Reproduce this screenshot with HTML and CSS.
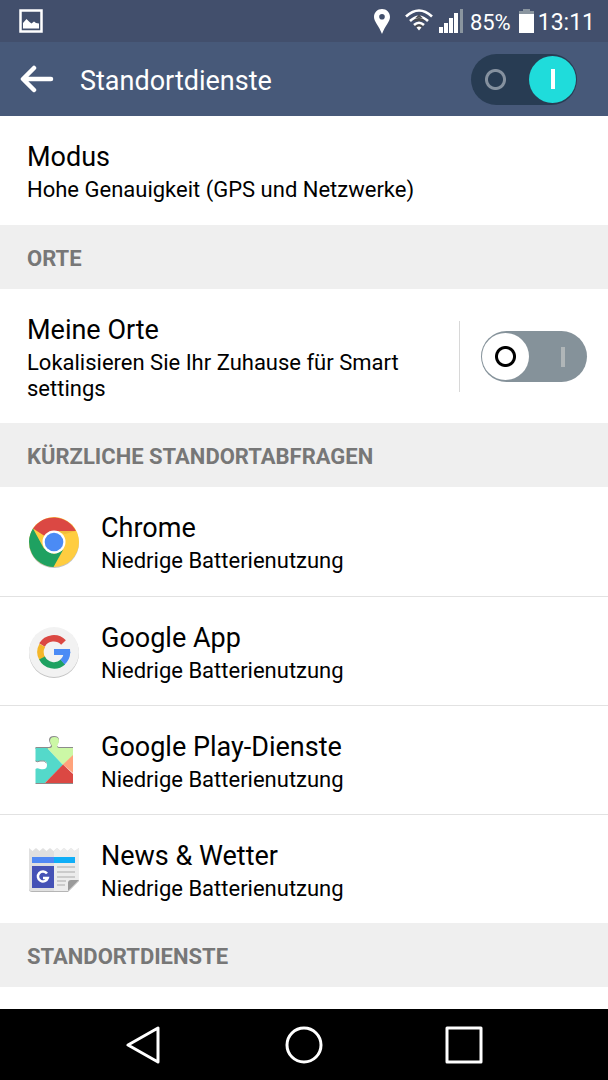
FILE: index.html
```html
<!doctype html>
<html lang="de">
<head>
	<meta charset="utf-8">
	<meta name="viewport" content="width=device-width, initial-scale=1">
	<title>Standortdienste</title>
	<link rel="stylesheet" href="styles.css">
</head>
<body>
<div class="statusbar">
	<svg class="picture" width="24" height="24" viewBox="0 0 24 24">
		<rect x="1.5" y="1.5" width="21" height="21" fill="none" stroke="#fff" stroke-width="2.5"/>
		<path d="M4 19.500v-5.500l3.500-4 3 3 2 1.500 2.500-2 2 1.500 3 .5v5z" fill="#fff"/>
	</svg>
	<div class="status">
		<svg class="pin" width="16" height="25" viewBox="0 0 16 25">
			<path fill="#fff" fill-rule="evenodd" d="M8 0C3.500 0 0 3.500 0 8c0 4.500 5 9 8 17 3-8 8-12.500 8-17 0-4.500-3.500-8-8-8zm0 5a2.800 2.800 0 1 1 0 5.600A2.800 2.800 0 0 1 8 5z"/>
		</svg>
		<svg class="wifi" width="28" height="24" viewBox="0 0 28 24">
			<path d="M8 12l6-6.500 6 6.500zM8 15l6 6 6-6z" fill="#494b50"/>
			<g fill="none" stroke="#fff" stroke-width="2.600">
				<path d="M1 7.500q13-12 26 0"/>
				<path d="M5 12q9-8.500 18 0"/>
				<path d="M9 16q5-4.500 10 0"/>
			</g>
			<path d="M10 9.500l4-4 4 4q-4-1.500-8 0z" fill="#494b50"/>
			<path d="M14 21.500l-2.500-3q2.500-2 5 0z" fill="#fff"/>
		</svg>
		<svg class="signal" width="24" height="24" viewBox="0 0 24 24">
			<path fill="#fff" d="M0 18h4v6H0zM5 14h4v10H5zM10 9h4v15h-4zM15 4h4v20h-4z"/>
			<path fill="#8a959f" d="M21 0h3v24h-3z"/>
		</svg>
		<span class="percent">85%</span>
		<svg class="battery" width="15" height="24" viewBox="0 0 15 24">
			<path fill="#8a959f" d="M4 0h7v2h4v3H0V2h4z"/>
			<path fill="#fff" d="M0 5h15v19H0z"/>
		</svg>
		<span class="clock">13:11</span>
	</div>
</div>
<header class="header">
	<button class="back" aria-label="Zurück">
		<svg width="34" height="28" viewBox="0 0 34 28" fill="none" stroke="#fff" stroke-width="4.500" stroke-linecap="round" stroke-linejoin="round">
			<path d="M14 3L3 14l11 11M4 14h27"/>
		</svg>
	</button>
	<h1>Standortdienste</h1>
	<input type="checkbox" class="switch" aria-label="Standortdienste" checked>
</header>
<main>
	<a href="#modus" class="row">
		<span class="text">
			<span class="title">Modus</span>
			<span class="summary">Hohe Genauigkeit (GPS und Netzwerke)</span>
		</span>
	</a>
	<h2>ORTE</h2>
	<div class="row places">
		<label class="text" for="places">
			<span class="title">Meine Orte</span>
			<span class="summary">Lokalisieren Sie Ihr Zuhause für Smart settings</span>
		</label>
		<div class="side">
			<input type="checkbox" class="switch" id="places">
		</div>
	</div>
	<h2>KÜRZLICHE STANDORTABFRAGEN</h2>
	<a href="#chrome" class="row app">
		<svg class="icon" viewBox="0 0 54 54">
			<circle cx="27" cy="28" r="25" fill="#c4c4c4"/>
			<circle cx="27" cy="27" r="25" fill="#ffcd40"/>
			<path d="M27 27L6 13.500A25 25 0 0 1 49 16H27z" fill="#db4843"/>
			<path d="M29 16h20l-11 3z" fill="#f0bd3c"/>
			<path d="M6 13.500L16.600 33 27 39l9-4-9.500 17A25 25 0 0 1 6 13.500z" fill="#1fa161"/>
			<circle cx="27" cy="27" r="11.500" fill="#fff"/>
			<circle cx="27" cy="27" r="9.300" fill="#4b8bf5"/>
		</svg>
		<span class="text">
			<span class="title">Chrome</span>
			<span class="summary">Niedrige Batterienutzung</span>
		</span>
	</a>
	<a href="#google" class="row app">
		<svg class="icon" viewBox="0 0 54 54">
			<circle cx="27" cy="28" r="25" fill="#c4c4c4"/>
			<circle cx="27" cy="27" r="25" fill="#f2f2f2"/>
			<g fill="none" stroke-width="6.500">
				<path d="M15 20A13.500 13.500 0 0 1 36.500 17.500" stroke="#db4843"/>
				<path d="M15.300 33.700A13.500 13.500 0 0 1 15.300 20.300" stroke="#f4b629"/>
				<path d="M36 37A13.500 13.500 0 0 1 15 33" stroke="#1fa161"/>
				<path d="M40 27A13.500 13.500 0 0 1 35.500 37" stroke="#4b8bf5"/>
			</g>
			<path d="M27 24h16l.3 4L40 30H27z" fill="#4b8bf5"/>
		</svg>
		<span class="text">
			<span class="title">Google App</span>
			<span class="summary">Niedrige Batterienutzung</span>
		</span>
	</a>
	<a href="#play" class="row app">
		<svg class="icon" viewBox="0 0 54 54">
			<path d="M8.500 13h12.500q3 0 3-2-2-3-2-5 0-4 5-4t5 4q0 2-2 5 0 2 3 2h13v2H8.500zM8.500 49H46v1H8.500z" fill="#8c8c8c"/>
			<path d="M20 14h2q3 0 3-2-2-3-2-5 0-4 4.500-4T32 7q0 2-2 5 0 2 3 2h13v8L36 31z" fill="#ccf8a6"/>
			<path d="M8.500 14H20l16 17-18 18H8.500V35q1.500-1.500 4.500 0 7 1.500 7-4t-7-4q-3 1.500-4.500 0z" fill="#54d9ca"/>
			<path d="M8.500 27q1.500 1.500 4.500 0 5-1 6.500 2" fill="none" stroke="#8c8c8c"/>
			<path d="M46 21v18l-10-8.500z" fill="#ffa37b"/>
			<path d="M36 30.500L46 40v9H18z" fill="#db4843"/>
		</svg>
		<span class="text">
			<span class="title">Google Play-Dienste</span>
			<span class="summary">Niedrige Batterienutzung</span>
		</span>
	</a>
	<a href="#news" class="row app">
		<svg class="icon" viewBox="0 0 54 54">
			<path d="M2 10v36q0 3 3 3h36l11-11v-2z" fill="#b5b5b5"/>
			<path d="M2 5l3.500 3L9 5l3.500 3L16 5l3.500 3L23 5l3.500 3L30 5l3.500 3L37 5l3.500 3L44 5l3.500 3L52 5v32L41 48H4q-2 0-2-2z" fill="#e0e0e0"/>
			<path d="M27 8l3-3 3.500 3L37 5l3.500 3L44 5l3.500 3L52 5v32L41 48H27z" fill="#ececec"/>
			<path d="M5 14h22v6H5z" fill="#5089f4"/>
			<path d="M27 14h21v6H27z" fill="#10aef7"/>
			<path d="M5 23h22v22H5z" fill="#4552b6"/>
			<path d="M20 30.500A5 5 0 1 0 20.700 35H16" fill="none" stroke="#fff" stroke-width="2.500"/>
			<path d="M30 23h18v2H30zM30 28h18v2H30zM30 33h18v2H30zM30 37h9v2h-9zM30 41h8v2h-8z" fill="#cbcbcb"/>
			<path d="M41 48V40q0-3 3-3h8z" fill="#9a9a9a"/>
		</svg>
		<span class="text">
			<span class="title">News &amp; Wetter</span>
			<span class="summary">Niedrige Batterienutzung</span>
		</span>
	</a>
	<h2>STANDORTDIENSTE</h2>
</main>
<nav class="navbar">
	<button aria-label="Zurück">
		<svg width="38" height="38" viewBox="0 0 38 38"><path d="M3 19L33 2v34z"/></svg>
	</button>
	<button aria-label="Startseite">
		<svg width="38" height="38" viewBox="0 0 38 38"><circle cx="19" cy="19" r="17"/></svg>
	</button>
	<button aria-label="Übersicht">
		<svg width="38" height="38" viewBox="0 0 38 38"><rect x="2" y="2" width="34" height="34"/></svg>
	</button>
</nav>
</body>
</html>
```
FILE: styles.css
```css
* {
	margin: 0;
	padding: 0;
	box-sizing: border-box;
}

body {
	display: flex;
	flex-direction: column;
	height: 100vh;
	background: #fff;
	color: #000;
	font: 22px/26px Roboto, sans-serif;
}

button {
	background: none;
	border: none;
}

svg {
	display: block;
}

.statusbar {
	display: flex;
	flex: none;
	justify-content: space-between;
	align-items: center;
	height: 42px;
	padding: 0 13px 0 19px;
	background: #424f6c;
	color: #fff;
}

.status {
	display: flex;
	align-items: center;
}

.wifi {
	margin: 0 6px 0 15px;
}

.signal {
	margin-right: 7px;
}

.percent,
.clock {
	padding-top: 3px;
}

.percent {
	margin-right: 8px;
}

.battery {
	margin-right: 4px;
}

.clock {
	font-size: 23px;
}

.header {
	display: flex;
	flex: none;
	align-items: center;
	height: 74px;
	padding: 0 31px 0 20px;
	background: #475979;
	color: #fff;
}

.header h1 {
	flex: 1;
	margin-left: 26px;
	padding-top: 4px;
	font-size: 27px;
	font-weight: 400;
	line-height: 34px;
}

/* on / off switch, both marks are always shown */
.switch {
	display: flex;
	flex: none;
	align-items: center;
	justify-content: space-between;
	appearance: none;
	width: 106px;
	height: 51px;
	padding: 0 1px;
	border-radius: 26px;
	background: #85929a;
}

.switch::before,
.switch::after {
	content: "";
	width: 47px;
	height: 47px;
	border-radius: 50%;
}

.switch::before {
	background: radial-gradient(circle, #fff 7px, #000 8px, #000 10px, #fff 11px);
}

.switch::after {
	background: linear-gradient(#b0b6b8, #b0b6b8) center / 4px 20px no-repeat;
}

.switch:checked {
	background: #283c53;
}

.switch:checked::before {
	background: radial-gradient(circle, transparent 7px, #85919f 8px, #85919f 10px, transparent 11px);
}

.switch:checked::after {
	background: linear-gradient(#fff, #fff) center / 4px 20px no-repeat #1fdcdb;
}

main {
	flex: 1;
	overflow: hidden;
}

h2 {
	height: 64px;
	padding-left: 27px;
	background: #efefef;
	color: #777;
	font-size: 22px;
	font-weight: 700;
	line-height: 67px;
}

.row {
	display: flex;
	align-items: center;
	padding: 22px 21px 22px 27px;
	color: #000;
	text-decoration: none;
}

.text {
	flex: 1;
}

.title,
.summary {
	display: block;
}

.title {
	padding: 2px 0 3px;
	font-size: 27px;
	line-height: 34px;
}

.places {
	padding-bottom: 21px;
}

.app + .app {
	border-top: 1px solid #e2e2e2;
	padding-bottom: 21px;
}

.icon {
	flex: none;
	width: 54px;
	height: 54px;
	margin-right: 20px;
}

.side {
	display: flex;
	align-items: center;
	height: 71px;
	margin-left: 20px;
	padding-left: 21px;
	border-left: 1px solid #d8d8d8;
}

.navbar {
	display: grid;
	flex: none;
	grid-template-columns: repeat(3, 1fr);
	height: 71px;
	padding: 0 64px;
	background: #000;
}

.navbar button {
	display: flex;
	align-items: center;
	justify-content: center;
}

.navbar svg {
	fill: none;
	stroke: #fff;
	stroke-width: 3px;
	stroke-linejoin: round;
}
```
